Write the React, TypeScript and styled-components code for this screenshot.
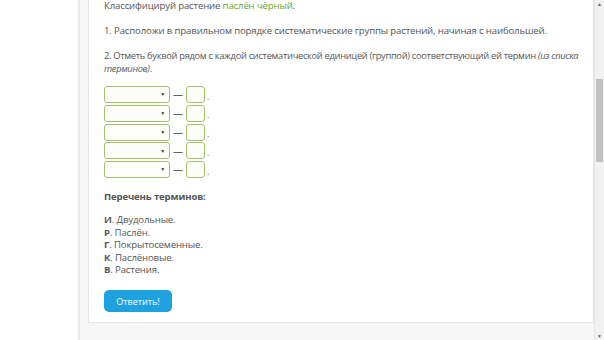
import styled, { createGlobalStyle } from 'styled-components';

const GlobalStyle = createGlobalStyle`
    html, body {
        margin: 0;
        padding: 0;
        height: 340px;
        overflow: hidden;
        background: #ffffff;
    }
`;

const Page = styled.div`
    display: flex;
    width: 604px;
    height: 340px;
    font-family: "Open Sans", "Liberation Sans", sans-serif;
`;

const Gutter = styled.div`
    width: 78px;
    flex-shrink: 0;
    background: #ffffff;
`;

const Wrapper = styled.div`
    flex: 1;
    display: flex;
    flex-direction: column;
    box-sizing: border-box;
    padding-left: 8px;
    border-left: 2px solid #e8e8e8;
    background: #f6f6f6;
`;

const Card = styled.div`
    box-sizing: border-box;
    height: 323px;
    padding: 0 10px 0 15px;
    background: #ffffff;
    border: 1px solid #e4e4e4;
    border-top: none;
    font-size: 9.6px;
    letter-spacing: -0.15px;
    line-height: 12.5px;
    color: #555555;
`;

const Para = styled.p<{ $top?: number; $tight?: boolean }>`
    margin: ${(p) => p.$top ?? 12.5}px 0 0;
    font-size: ${(p) => (p.$tight ? '9.3px' : 'inherit')};
    letter-spacing: ${(p) => (p.$tight ? '-0.3px' : 'inherit')};
`;

const Green = styled.span`
    color: #6aa529;
`;

const Rows = styled.div`
    display: flex;
    flex-direction: column;
    gap: 1.8px;
    margin-top: 11px;
`;

const Row = styled.div`
    display: flex;
    align-items: center;
    height: 17px;
`;

const Select = styled.div`
    box-sizing: border-box;
    width: 66px;
    height: 17px;
    border: 1px solid #a2bf6a;
    border-radius: 3px;
    background: #fdfef9;
    display: flex;
    align-items: center;
    justify-content: flex-end;
    padding-right: 4px;
    font-size: 5px;
    color: #333333;
`;

const Dash = styled.span`
    width: 16px;
    text-align: center;
    color: #666666;
    font-size: 10px;
`;

const Box = styled.div`
    box-sizing: border-box;
    width: 19px;
    height: 17px;
    border: 1px solid #a2bf6a;
    border-radius: 3px;
    background: #fdfef9;
`;

const Dot = styled.span`
    margin-left: 2px;
    color: #777777;
    font-size: 9px;
    line-height: 17px;
    padding-top: 3px;
`;

const Heading = styled.p`
    margin: 13px 0 0;
    font-weight: 700;
`;

const List = styled.ul`
    list-style: none;
    margin: 10.5px 0 0;
    padding: 0;
`;

const Letter = styled.b`
    font-weight: 700;
`;

const Button = styled.button`
    margin-top: 13.5px;
    width: 68px;
    height: 22px;
    border: none;
    border-radius: 5px;
    background: #1ea1df;
    color: #ffffff;
    font-family: "Open Sans", "Liberation Sans", sans-serif;
    font-size: 9px;
    padding: 0;
`;

const Scrollbar = styled.div`
    width: 9px;
    flex-shrink: 0;
    background: #f1f1f1;
    border-left: 1px solid #e6e6e6;
    display: flex;
    flex-direction: column;
    align-items: center;
`;

const Arrow = styled.span`
    font-size: 5px;
    line-height: 8px;
    height: 8px;
    color: #666666;
`;

const Thumb = styled.div`
    width: 7px;
    height: 83px;
    margin-top: 71px;
    background: #c2c2c2;
`;

const Spacer = styled.div`
    flex: 1;
`;

const terms = [
    ['И', 'Двудольные.'],
    ['Р', 'Паслён.'],
    ['Г', 'Покрытосеменные.'],
    ['К', 'Паслёновые.'],
    ['В', 'Растения.'],
];

export default function App() {
    return (
        <Page>
            <GlobalStyle />
            <Gutter />
            <Wrapper>
                <Card>
                    <Para $top={0}>
                        Классифицируй растение <Green>паслён чёрный</Green>.
                    </Para>
                    <Para>
                        1. Расположи в правильном порядке систематические группы растений, начиная с наибольшей.
                    </Para>
                    <Para $tight>
                        2. Отметь буквой рядом с каждой систематической единицей (группой) соответствующий ей термин <i>(из списка терминов)</i>.
                    </Para>
                    <Rows>
                        {[0, 1, 2, 3, 4].map((i) => (
                            <Row key={i}>
                                <Select>▼</Select>
                                <Dash>—</Dash>
                                <Box />
                                <Dot>.</Dot>
                            </Row>
                        ))}
                    </Rows>
                    <Heading>Перечень терминов:</Heading>
                    <List>
                        {terms.map(([l, t]) => (
                            <li key={l}>
                                <Letter>{l}</Letter>. {t}
                            </li>
                        ))}
                    </List>
                    <Button>Ответить!</Button>
                </Card>
            </Wrapper>
            <Scrollbar>
                <Arrow>▲</Arrow>
                <Thumb />
                <Spacer />
                <Arrow>▼</Arrow>
            </Scrollbar>
        </Page>
    );
}
